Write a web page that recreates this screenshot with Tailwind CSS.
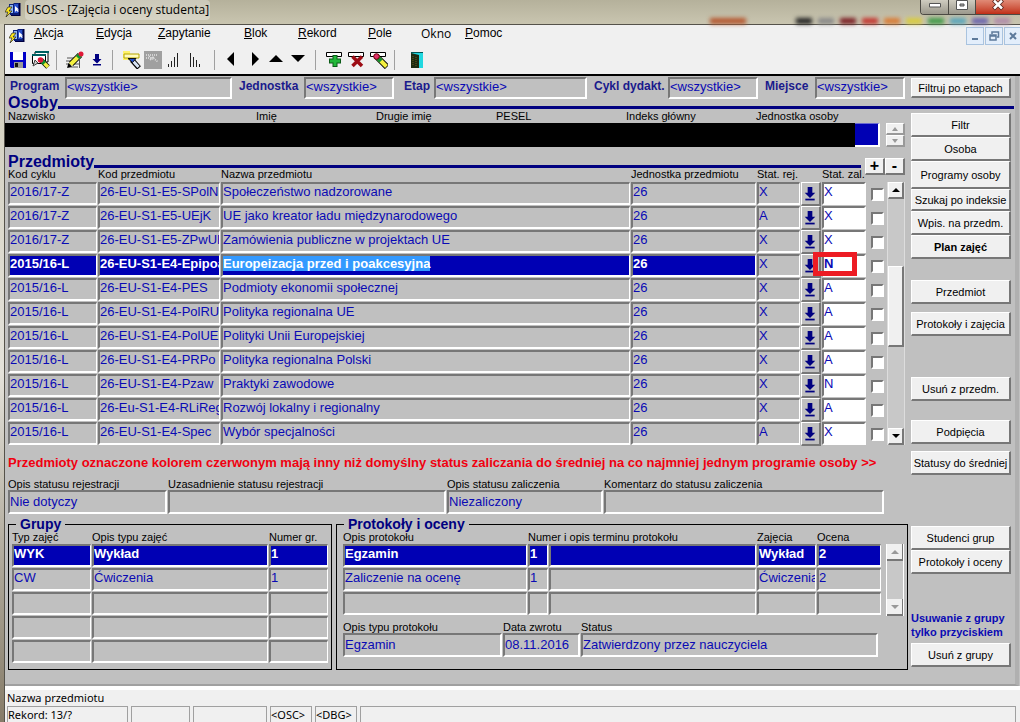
<!DOCTYPE html>
<html lang="pl">
<head>
<meta charset="utf-8">
<title>USOS - [Zajęcia i oceny studenta]</title>
<script src="https://cdn.jsdelivr.net/npm/@tailwindcss/browser@4"></script>
</head>
<body class="flex min-h-screen flex-col bg-[#c0c0c0] font-['Liberation_Sans',Arial,sans-serif] text-[11px] leading-3 text-black">

<svg class="hidden" aria-hidden="true">
  <symbol id="usos" viewBox="0 0 16 16">
    <path d="M4 2h4l1-1h5v12H5z" fill="#0a1e78"/><path d="M5 3h3v8H5z" fill="#8fb6f0"/><path d="M9 2h4v9H9z" fill="#2a50c8"/><path d="M10 4v6l1.500-1.500L13 10l.800-1-1.500-1.500H14z" fill="#fff"/><path d="M14 1h1.500v13H6v-1h8z" fill="#000040"/>
    <path d="M3 5L0 10h3l-2 5 6-6H4l3-4z" fill="#ffe81a" stroke="#222" stroke-width=".7"/>
  </symbol>
  <symbol id="darr" viewBox="0 0 10 12">
    <path d="M3 0h4v5h2.500L5 9.500.500 5H3z" fill="#000080"/><path d="M1 10h8v1.500H1z" fill="#000080"/>
  </symbol>
</svg>

<!-- title bar -->
<header class="relative flex h-6 shrink-0 items-start bg-linear-to-b from-[#b5b19b] to-[#c9c5b0] pl-[5px]">
  <svg class="mt-0.5 size-4"><use href="#usos"/></svg>
  <h1 class="ml-1 rounded bg-white/30 px-px font-['Open_Sans',sans-serif] text-[12px] leading-5">USOS - [Zajęcia i oceny studenta]</h1>
  <div class="absolute right-2.5 bottom-0 flex h-1.5 gap-1.5 blur-[2px]" aria-hidden="true">
    <i class="mr-11 w-9 bg-[#b5572f]"></i><i class="w-4 bg-[#222]"></i><i class="w-4 bg-[#888]"></i><i class="w-4 bg-[#7a1c22]"></i><i class="w-4 bg-[#c3342e]"></i><i class="w-4 bg-[#d97a33]"></i><i class="w-4 bg-[#d9cc3d]"></i><i class="w-4 bg-[#3f9a48]"></i><i class="w-4 bg-[#57a5bb]"></i><i class="w-4 bg-[#6a62ad]"></i><i class="w-4 bg-[#b08aa8]"></i>
  </div>
  <div class="relative ml-auto flex h-[15px] overflow-hidden rounded-bl-[4px] border border-t-0 border-r-0 border-[#4c4a44]">
    <button aria-label="Minimalizuj" class="flex w-7 justify-center border-r border-[#4c4a44] bg-linear-to-b from-[#cfccc0] to-[#9b988c] pt-0.5"><svg class="h-3 w-3" viewBox="0 0 12 12"><path d="M.5 1.500h11v3.500H.5z" fill="#fff" stroke="#555"/></svg></button>
    <button aria-label="Maksymalizuj" class="flex w-[27px] justify-center border-r border-[#4c4a44] bg-linear-to-b from-[#cfccc0] to-[#9b988c]"><svg class="h-3 w-3" viewBox="0 0 12 12"><path d="M.5.500h11v9H.5z" fill="#fff" stroke="#555"/><path d="M4 4h4v2H4z" fill="#aaa" stroke="#555"/></svg></button>
    <button aria-label="Zamknij" class="flex w-11 justify-center bg-linear-to-b from-[#e08a76] to-[#c02c14]"><svg class="h-3 w-3" viewBox="0 0 12 12"><path d="M1.500 0L10.500 9M10.500 0L1.500 9" stroke="#57241c" stroke-width="4"/><path d="M2 .5L10 8.500M10 .5L2 8.500" stroke="#fff" stroke-width="2.500"/></svg></button>
  </div>
</header>

<div class="flex grow">
<div class="w-1 shrink-0 bg-linear-to-b from-[#d0ccba] via-[#e4e2da] to-[#857b68]"></div>
<div class="flex min-w-0 grow flex-col border-t border-l border-[#55524a]">

  <!-- menu and toolbar -->
  <div class="border-b-2 border-black bg-[#f0f0f0]">
    <nav class="flex h-5 items-center pl-1 text-[12px] leading-4">
      <svg class="mt-0.5 size-4"><use href="#usos"/></svg>
      <a href="#" class="ml-[9px] w-[62px] pb-1"><u>A</u>kcja</a>
      <a href="#" class="w-[62px] pb-1"><u>E</u>dycja</a>
      <a href="#" class="w-[86px] pb-1"><u>Z</u>apytanie</a>
      <a href="#" class="w-[54px] pb-1"><u>B</u>lok</a>
      <a href="#" class="w-[70px] pb-1"><u>R</u>ekord</a>
      <a href="#" class="w-[53px] pb-1"><u>P</u>ole</a>
      <a href="#" class="w-[44px] pb-0.5 font-['Open_Sans',sans-serif]">Okno</a>
      <a href="#" class="pb-1"><u>P</u>omoc</a>
      <div class="mt-0.5 ml-auto flex gap-px">
        <button aria-label="Minimalizuj okno" class="flex h-[18px] w-[18px] items-center justify-center border border-[#a9c3df] bg-[#e3eefb]"><svg class="size-3" viewBox="0 0 12 12"><path d="M3 8h6v2H3z" fill="#5d7a9b"/></svg></button>
        <button aria-label="Przywróć okno" class="flex h-[18px] w-[18px] items-center justify-center border border-[#a9c3df] bg-[#e3eefb]"><svg class="size-3" viewBox="0 0 12 12" fill="none" stroke="#5d7a9b" stroke-width="1.500"><path d="M4 4V2h6.500v5H9M2 5h6v5H2zM2 6h6"/></svg></button>
        <button aria-label="Zamknij okno" class="flex h-[18px] w-4 items-center justify-center border border-r-0 border-[#a9c3df] bg-[#e3eefb]"><svg class="size-3" viewBox="0 0 12 12"><path d="M3 3l6 6M9 3l-6 6" stroke="#5d7a9b" stroke-width="2"/></svg></button>
      </div>
    </nav>
    <div class="flex h-[29px] items-center pl-[5px]">
      <button aria-label="Zapisz"><svg class="size-4" viewBox="0 0 16 16"><path d="M0 0h16v16H1l-1-1z" fill="#0000c8"/><path d="M3 0h10v8H3z" fill="#fff"/><path d="M4 10h9v6H4z" fill="#999"/><path d="M5 11h3v4H5z" fill="#111"/></svg></button>
      <button class="ml-1.5" aria-label="Wyszukaj"><svg class="size-[18px]" viewBox="0 0 18 18"><path d="M3 1h13v10H3z" fill="#fff" stroke="#000"/><path d="M.5 3.500h13v9H.5z" fill="#fff" stroke="#000"/><path d="M0 3h14v2H0zM3 0h14v2H3z" fill="#006060"/><path d="M3 9l-2 6 5-3z" fill="#ccc" stroke="#444"/><path d="M9 9l7 7" stroke="#000" stroke-width="5"/><path d="M9 9l7 7" stroke="#f4f040" stroke-width="3.500"/><path d="M9.500 9.500l3 3" stroke="#109030" stroke-width="4"/><circle cx="8.500" cy="9" r="2.800" fill="#e01838"/></svg></button>
      <i class="mr-[9px] ml-1.5 h-5 w-px bg-[#a0a0a0]"></i>
      <button aria-label="Edytuj"><svg class="size-[18px]" viewBox="0 0 18 18"><path d="M1 7h9M0 10h9M0 13h13M2 16h10M13.500 9v8" stroke="#555"/><path d="M5 13L14 4" stroke="#000" stroke-width="6"/><path d="M4.500 13.500L14 4" stroke="#f4f040" stroke-width="4"/><path d="M11.500 6.500L14 4" stroke="#109030" stroke-width="4.500"/><circle cx="15" cy="3" r="2.500" fill="#e01838"/><path d="M1 17l1.500-5 3.500 3.500z" fill="#000"/></svg></button>
      <button class="ml-2" aria-label="Lista wartości"><svg class="h-3 w-2.5"><use href="#darr"/></svg></button>
      <i class="mx-2.5 h-5 w-px bg-[#a0a0a0]"></i>
      <button aria-label="Wprowadź zapytanie"><svg class="size-[18px]" viewBox="0 0 18 18"><path d="M0 0h7v9H0z" fill="#fff36b"/><path d="M1 3h15v4H1z" fill="#fffbc0" stroke="#b5a400"/><path d="M9 9l7 8" stroke="#000" stroke-width="5"/><path d="M10 10l5.500 6" stroke="#d8e4f4" stroke-width="3"/><path d="M5 7.500h8l-3.500 4z" fill="#2050d0" stroke="#111"/></svg></button>
      <button class="ml-[3px]" aria-label="Anuluj zapytanie"><svg class="size-[18px]" viewBox="0 0 18 18"><path d="M0 0h18v18H0z" fill="#a0a0a0"/><path d="M2 4h12M2 7h5M8 6l6 5M6 9l4-3M5 5l4 4" stroke="#e4e4e4" stroke-width="1.500" stroke-dasharray="1 1"/></svg></button>
      <button class="ml-1.5" aria-label="Sortuj rosnąco"><svg class="h-4 w-3" viewBox="0 0 12 16"><path d="M.5 12v3M3.500 9v6M6.500 5v10M9.500 1v14" stroke="#222"/></svg></button>
      <button class="ml-2.5" aria-label="Sortuj malejąco"><svg class="h-4 w-3" viewBox="0 0 12 16"><path d="M.5 1v14M3.500 5v10M6.500 8v7M9.500 12v3" stroke="#222"/></svg></button>
      <i class="mx-3 h-5 w-px bg-[#a0a0a0]"></i>
      <button aria-label="Poprzedni blok"><svg class="h-4 w-2" viewBox="0 0 8 16"><path d="M0 7l7-7v14z"/></svg></button>
      <button class="ml-4" aria-label="Następny blok"><svg class="h-4 w-2" viewBox="0 0 8 16"><path d="M8 7L1 0v14z"/></svg></button>
      <button class="ml-2.5" aria-label="Poprzedni rekord"><svg class="h-4 w-3.5" viewBox="0 0 14 16"><path d="M0 10l7-7 7 7z"/></svg></button>
      <button class="ml-2" aria-label="Następny rekord"><svg class="h-4 w-3.5" viewBox="0 0 14 16"><path d="M0 3l7 7 7-7z"/></svg></button>
      <i class="mr-2.5 ml-2.5 h-5 w-px bg-[#a0a0a0]"></i>
      <button aria-label="Wstaw rekord"><svg class="h-[18px] w-4" viewBox="0 0 16 18"><path d="M.5 1.500h15v4H.5z" fill="#fff" stroke="#000"/><path d="M9 4v12M3 10h12" stroke="#0b5c18" stroke-width="5"/><path d="M9 5v10M4 10h10" stroke="#22b83a" stroke-width="3"/></svg></button>
      <button class="ml-1.5" aria-label="Usuń rekord"><svg class="h-[18px] w-4" viewBox="0 0 16 18"><path d="M.5 1.500h15v4H.5z" fill="#fff" stroke="#000"/><path d="M4.500 5.500l9.500 9.500M14 5.500L4.500 15" stroke="#9c0c14" stroke-width="3.500"/></svg></button>
      <button class="ml-1.5" aria-label="Wyczyść rekord"><svg class="size-[18px]" viewBox="0 0 18 18"><path d="M.5 1.500h15v4H.5z" fill="#fff" stroke="#000"/><path d="M6 5l11 11" stroke="#000" stroke-width="6"/><path d="M6 5l10.500 10.500" stroke="#f4f040" stroke-width="4"/><path d="M8 7l3 3" stroke="#109030" stroke-width="4.500"/><circle cx="6.500" cy="5.500" r="2.800" fill="#e0306a" stroke="#600"/></svg></button>
      <i class="mr-4 ml-1.5 h-5 w-px bg-[#a0a0a0]"></i>
      <button aria-label="Wyjście"><svg class="h-4 w-3" viewBox="0 0 12 16"><path d="M0 0h12v16H0z" fill="#20d8e0"/><path d="M0 0h12v1H0z" fill="#055"/><path d="M0 1l8 2v13H0z" fill="#1c2a10"/><path d="M2 4v10M5 5v10" stroke="#6a5a20" stroke-dasharray="1 1"/></svg></button>
    </div>
  </div>

  <!-- form -->
  <main class="mr-px flex grow flex-col border-r-4 border-b-2 border-[#a0a0a0] border-r-[#b0b0b0] pr-px pb-3">
    <!-- filters -->
    <form class="flex h-6 items-center pr-[3px] pl-[5px] text-[13px] font-bold text-[#1a1a8c]">
      <label for="f1" class="w-[55px] shrink-0 pb-1 text-[12px]">Program</label>
      <input id="f1" readonly value="&lt;wszystkie&gt;" class="h-[22px] w-[167px] shrink-0 border-2 border-white border-t-[#777] border-l-[#777] pb-[3px] font-normal text-[#0a0ab4]">
      <label for="f2" class="ml-[7px] w-[65px] shrink-0 pb-1 text-[12px]">Jednostka</label>
      <input id="f2" readonly value="&lt;wszystkie&gt;" class="h-[22px] w-[90px] shrink-0 border-2 border-white border-t-[#777] border-l-[#777] pb-[3px] font-normal text-[#0a0ab4]">
      <label for="f3" class="ml-2.5 w-[30px] shrink-0 pb-1 text-[12px]">Etap</label>
      <input id="f3" readonly value="&lt;wszystkie&gt;" class="h-[22px] min-w-0 flex-1 border-2 border-white border-t-[#777] border-l-[#777] pb-[3px] font-normal text-[#0a0ab4]">
      <label for="f4" class="ml-[7px] w-[74px] shrink-0 pb-1 text-[12px] whitespace-nowrap">Cykl dydakt.</label>
      <input id="f4" readonly value="&lt;wszystkie&gt;" class="h-[22px] w-[90px] shrink-0 border-2 border-white border-t-[#777] border-l-[#777] pb-[3px] font-normal text-[#0a0ab4]">
      <label for="f5" class="ml-[7px] w-[50px] shrink-0 pb-1 text-[12px]">Miejsce</label>
      <input id="f5" readonly value="&lt;wszystkie&gt;" class="h-[22px] w-[90px] shrink-0 border-2 border-white border-t-[#777] border-l-[#777] pb-[3px] font-normal text-[#0a0ab4]">
      <button type="button" class="ml-1.5 h-5 w-[100px] shrink-0 border border-r-2 border-b-2 border-[#777] border-t-white border-l-white bg-[#f0f0f0] text-[11px] font-normal text-black">Filtruj po etapach</button>
    </form>
    <div class="flex h-[9px] items-end pl-[3px]">
      <h2 class="text-[16px] leading-3 font-bold text-[#000080]">Osoby</h2>
      <i class="h-[3px] flex-1 bg-[#000080]"></i>
    </div>

    <div class="flex">
      <div class="min-w-0 flex-1 pl-[3px]">
        <!-- persons -->
        <div class="flex h-3.5 items-center">
          <span class="w-[248px]">Nazwisko</span><span class="w-[120px]">Imię</span><span class="w-[120px]">Drugie imię</span><span class="w-[130px]">PESEL</span><span class="w-[130px]">Indeks główny</span><span>Jednostka osoby</span>
        </div>
        <div class="-ml-[3px] flex h-6 pr-[3px]">
          <div class="flex-1 bg-black"></div>
          <div class="mr-1.5 w-[25px] border-t border-r-2 border-b-2 border-white border-t-[#6a6ad0] bg-[#0000b4]"></div>
          <div class="flex w-[19px] flex-col">
            <button aria-label="Poprzednia osoba" class="flex h-3 items-center justify-center border border-r-2 border-b-2 border-[#999] border-t-white border-l-white bg-[#f0f0f0]"><svg class="h-1 w-1.5" viewBox="0 0 6 4"><path d="M0 4l3-4 3 4z" fill="#999"/></svg></button>
            <button aria-label="Następna osoba" class="flex h-3 items-center justify-center border border-r-2 border-b-2 border-[#999] border-t-white border-l-white bg-[#f0f0f0]"><svg class="h-1 w-1.5" viewBox="0 0 6 4"><path d="M0 0l3 4 3-4z" fill="#999"/></svg></button>
          </div>
        </div>

        <!-- subjects -->
        <div class="flex h-[21px] items-end pr-[3px]">
          <h2 class="text-[16px] leading-3 font-bold text-[#000080]">Przedmioty</h2>
          <i class="mr-1 h-[3px] flex-1 bg-[#000080]"></i>
          <div class="-mb-[7px] flex text-[16px] leading-3 font-bold">
            <button class="h-[17px] w-5 border border-r-2 border-b-2 border-[#777] border-t-white border-l-white bg-[#f0f0f0]">+</button>
            <button class="h-[17px] w-5 border border-r-2 border-b-2 border-[#777] border-t-white border-l-white bg-[#f0f0f0]">-</button>
          </div>
        </div>
        <div class="flex">
          <table class="-ml-px w-0 min-w-0 flex-1 table-fixed border-separate border-spacing-x-px border-spacing-y-0">
            <colgroup><col class="w-[89px]"><col class="w-[122px]"><col><col class="w-[125px]"><col class="w-[43px]"><col class="w-5"><col class="w-[44px]"><col class="w-[19px]"></colgroup>
            <thead><tr class="h-[14px] text-left align-top whitespace-nowrap"><th class="p-0 font-normal">Kod cyklu</th><th class="p-0 font-normal">Kod przedmiotu</th><th class="p-0 font-normal">Nazwa przedmiotu</th><th class="p-0 font-normal">Jednostka przedmiotu</th><th class="p-0 font-normal" colspan="2">Stat. rej.</th><th class="p-0 font-normal" colspan="2">Stat. zal.</th></tr></thead>
            <tbody id="subjects"></tbody>
          </table>
          <div class="mt-[14px] mr-[3px] mb-px flex w-[18px] flex-col border-x border-[#ddd]">
            <button aria-label="W górę" class="flex h-[17px] shrink-0 items-center justify-center border border-r-2 border-b-2 border-[#777] border-t-white border-l-white bg-[#f0f0f0]"><svg class="h-1 w-2" viewBox="0 0 8 4"><path d="M0 4l4-4 4 4z"/></svg></button>
            <div class="h-[67px] bg-[#c8c8c8]"></div>
            <div class="h-[81px] border border-r-2 border-b-2 border-[#777] border-t-white border-l-white bg-[#f0f0f0]"></div>
            <div class="flex-1 bg-[#c8c8c8]"></div>
            <button aria-label="W dół" class="flex h-[17px] shrink-0 items-center justify-center border border-r-2 border-b-2 border-[#777] border-t-white border-l-white bg-[#f0f0f0]"><svg class="h-1 w-2" viewBox="0 0 8 4"><path d="M0 0l4 4 4-4z"/></svg></button>
          </div>
        </div>

        <p class="mt-[9px] text-[13px] leading-4 font-bold whitespace-nowrap text-[#f00010]">Przedmioty oznaczone kolorem czerwonym mają inny niż domyślny status zaliczania do średniej na co najmniej jednym programie osoby &gt;&gt;</p>

        <div class="mt-[7px] flex gap-px pr-6">
          <label class="flex w-[159px] flex-col">Opis statusu rejestracji
            <input readonly value="Nie dotyczy" class="h-6 w-full border-2 border-white border-t-[#777] border-l-[#777] pb-0.5 text-[13px] text-[#0a0ab4]"></label>
          <label class="flex flex-1 flex-col">Uzasadnienie statusu rejestracji
            <input readonly class="h-6 w-full border-2 border-white border-t-[#777] border-l-[#777] text-[13px] text-[#0a0ab4]"></label>
          <label class="flex w-[156px] flex-col">Opis statusu zaliczenia
            <input readonly value="Niezaliczony" class="h-6 w-full border-2 border-white border-t-[#777] border-l-[#777] pb-0.5 text-[13px] text-[#0a0ab4]"></label>
          <label class="flex w-[280px] flex-col">Komentarz do statusu zaliczenia
            <input readonly class="h-6 w-full border-2 border-white border-t-[#777] border-l-[#777] text-[13px] text-[#0a0ab4]"></label>
        </div>

        <!-- groups and grades -->
        <div class="mt-[5px] flex items-stretch gap-1">
          <fieldset class="w-[324px] border border-black px-0.5 pb-[5px]">
            <legend class="ml-[5px] px-1 text-[14px] leading-[10px] font-bold text-[#000080]">Grupy</legend>
            <table class="w-full table-fixed border-separate border-spacing-x-px border-spacing-y-0">
              <colgroup><col class="w-[79px]"><col><col class="w-[59px]"></colgroup>
              <thead><tr class="h-[15px] text-left whitespace-nowrap"><th class="p-0 font-normal">Typ zajęć</th><th class="p-0 font-normal">Opis typu zajęć</th><th class="p-0 font-normal">Numer gr.</th></tr></thead>
              <tbody id="groups"></tbody>
            </table>
          </fieldset>
          <fieldset class="min-w-0 flex-1 border border-black pr-[3px] pb-[5px] pl-1.5">
            <legend class="ml-px px-1 text-[14px] leading-[10px] font-bold text-[#000080]">Protokoły i oceny</legend>
            <div class="flex">
              <table class="mr-1 -ml-px w-0 min-w-0 flex-1 table-fixed border-separate border-spacing-x-px border-spacing-y-0">
                <colgroup><col class="w-[184px]"><col class="w-5"><col><col class="w-[59px]"><col class="w-[64px]"></colgroup>
                <thead><tr class="h-[15px] text-left whitespace-nowrap"><th class="p-0 font-normal">Opis protokołu</th><th class="p-0 font-normal" colspan="2">Numer i opis terminu protokołu</th><th class="p-0 font-normal">Zajęcia</th><th class="p-0 font-normal">Ocena</th></tr></thead>
                <tbody id="protocols"></tbody>
              </table>
              <div class="mt-[15px] flex w-[18px] flex-col border-x border-white">
                <button aria-label="W górę" class="flex h-[17px] items-center justify-center border-r border-b-2 border-[#777] bg-[#f0f0f0]"><svg class="h-1 w-2" viewBox="0 0 8 4"><path d="M0 4l4-4 4 4z" fill="#999"/></svg></button>
                <div class="flex-1 bg-[#c8c8c8]"></div>
                <button aria-label="W dół" class="flex h-[17px] items-center justify-center border-r border-b-2 border-[#777] bg-[#f0f0f0]"><svg class="h-1 w-2" viewBox="0 0 8 4"><path d="M0 0l4 4 4-4z" fill="#999"/></svg></button>
              </div>
            </div>
            <div class="mt-[5px] flex gap-px pr-[26px]">
              <label class="flex w-[159px] flex-col">Opis typu protokołu
                <input readonly value="Egzamin" class="h-6 w-full border-2 border-white border-t-[#777] border-l-[#777] pb-0.5 text-[13px] text-[#0a0ab4]"></label>
              <label class="flex w-[77px] flex-col">Data zwrotu
                <input readonly value="08.11.2016" class="h-6 w-full border-2 border-white border-t-[#777] border-l-[#777] pb-0.5 text-[13px] text-[#0a0ab4]"></label>
              <label class="flex flex-1 flex-col">Status
                <input readonly value="Zatwierdzony przez nauczyciela" class="h-6 w-full border-2 border-white border-t-[#777] border-l-[#777] pb-0.5 text-[13px] text-[#0a0ab4]"></label>
            </div>
          </fieldset>
        </div>
      </div>

      <!-- actions -->
      <aside class="mr-[3px] ml-[3px] flex w-[100px] shrink-0 flex-col pt-1 *:shrink-0">
        <button class="h-6 border border-r-2 border-b-2 border-[#777] border-t-white border-l-white bg-[#f0f0f0]">Filtr</button>
        <button class="h-6 border border-r-2 border-b-2 border-[#777] border-t-white border-l-white bg-[#f0f0f0]">Osoba</button>
        <button class="h-7 border border-r-2 border-b-2 border-[#777] border-t-white border-l-white bg-[#f0f0f0]">Programy osoby</button>
        <button class="h-[22px] border border-r-2 border-b-2 border-[#777] border-t-white border-l-white bg-[#f0f0f0]">Szukaj po indeksie</button>
        <button class="h-6 border border-r-2 border-b-2 border-[#777] border-t-white border-l-white bg-[#f0f0f0]">Wpis. na przedm.</button>
        <button class="h-6 border border-r-2 border-b-2 border-[#777] border-t-white border-l-white bg-[#f0f0f0] font-bold">Plan zajęć</button>
        <button class="mt-[21px] h-6 border border-r-2 border-b-2 border-[#777] border-t-white border-l-white bg-[#f0f0f0]">Przedmiot</button>
        <button class="mt-2 h-6 border border-r-2 border-b-2 border-[#777] border-t-white border-l-white bg-[#f0f0f0]">Protokoły i zajęcia</button>
        <button class="mt-[41px] h-6 border border-r-2 border-b-2 border-[#777] border-t-white border-l-white bg-[#f0f0f0]">Usuń z przedm.</button>
        <button class="mt-[19px] h-6 border border-r-2 border-b-2 border-[#777] border-t-white border-l-white bg-[#f0f0f0]">Podpięcia</button>
        <button class="mt-[7px] h-6 border border-r-2 border-b-2 border-[#777] border-t-white border-l-white bg-[#f0f0f0] whitespace-nowrap">Statusy do średniej</button>
        <button class="mt-[51px] h-6 border border-r-2 border-b-2 border-[#777] border-t-white border-l-white bg-[#f0f0f0]">Studenci grup</button>
        <button class="h-6 border border-r-2 border-b-2 border-[#777] border-t-white border-l-white bg-[#f0f0f0]">Protokoły i oceny</button>
        <p class="mt-[37px] leading-[14px] font-bold whitespace-nowrap text-[#0a0ab4]">Usuwanie z grupy<br>tylko przyciskiem</p>
        <button class="mt-1 h-6 border border-r-2 border-b-2 border-[#777] border-t-white border-l-white bg-[#f0f0f0]">Usuń z grupy</button>
      </aside>
    </div>
  </main>

  <!-- status bar -->
  <footer class="shrink-0 border-t-4 border-white bg-[#f0f0f0] pl-0.5 font-['Noto_Sans',sans-serif] text-[11px]">
    <p class="h-4 leading-4">Nazwa przedmiotu</p>
    <div class="flex h-4 gap-[3px] leading-4 *:border-t *:border-l *:border-[#a0a0a0]">
      <span class="w-[121px] border-r border-r-white">Rekord: 13/?</span><span class="w-[59px] border-r border-r-white"></span><span class="w-[74px] border-r border-r-white"></span><span class="w-[42px] border-r border-r-white">&lt;OSC&gt;</span><span class="w-[42px] border-r border-r-white">&lt;DBG&gt;</span><span class="mr-1 flex-1 border-r border-r-white"></span>
    </div>
  </footer>
</div>
</div>

<script>
const base = 'h-[23px] mb-px overflow-hidden whitespace-nowrap border-2 border-r border-white border-t-[#777] border-l-[#777] text-[13px] leading-4 ';
const plain = 'text-[#0a0ab4]';
const active = 'bg-[#0000b4] font-bold text-white';
const cell = (t, on) => `<td class="p-0"><div class="${base}${on ? active : plain}">${t}</div></td>`;

const subjects = [
  ['2016/17-Z', '26-EU-S1-E5-SPolN', 'Społeczeństwo nadzorowane', 'X', 'X'],
  ['2016/17-Z', '26-EU-S1-E5-UEjK', 'UE jako kreator ładu międzynarodowego', 'A', 'X'],
  ['2016/17-Z', '26-EU-S1-E5-ZPwUE', 'Zamówienia publiczne w projektach UE', 'X', 'X'],
  ['2015/16-L', '26-EU-S1-E4-Epipoa', 'Europeizacja przed i poakcesyjna', 'X', 'N', true],
  ['2015/16-L', '26-EU-S1-E4-PES', 'Podmioty ekonomii społecznej', 'X', 'A'],
  ['2015/16-L', '26-EU-S1-E4-PolRUE', 'Polityka regionalna UE', 'X', 'A'],
  ['2015/16-L', '26-EU-S1-E4-PolUE', 'Polityki Unii Europejskiej', 'X', 'A'],
  ['2015/16-L', '26-EU-S1-E4-PRPo', 'Polityka regionalna Polski', 'X', 'A'],
  ['2015/16-L', '26-EU-S1-E4-Pzaw', 'Praktyki zawodowe', 'X', 'N'],
  ['2015/16-L', '26-Eu-S1-E4-RLiReg', 'Rozwój lokalny i regionalny', 'X', 'A'],
  ['2015/16-L', '26-EU-S1-E4-Spec', 'Wybór specjalności', 'A', 'X'],
];
document.getElementById('subjects').innerHTML = subjects.map(([c, k, n, r, z, on]) => `<tr>
  ${cell(c, on)}${cell(k, on)}${cell(on ? `<span class="bg-[#3399ff]">${n}</span>` : n, on)}${cell('26', on)}${cell(r)}
  <td class="p-0"><button aria-label="Lista statusów" class="flex h-6 w-full items-center justify-center border border-r-2 border-b-2 border-[#777] border-t-white border-l-white"><svg class="h-3.5 w-3 shrink-0"><use href="#darr"/></svg></button></td>
  <td class="relative p-0"><input aria-label="Status zaliczenia" value="${z}" class="mb-px block h-[23px] w-full border-2 border-white border-t-[#777] border-l-[#777] bg-white pb-[5px] text-[13px] text-[#0a0ab4] ${on ? 'font-bold' : ''}">${on ? '<span class="pointer-events-none absolute -top-0.5 -left-[9px] h-6 w-11 border-[5px] border-[#ed1c24]"></span>' : ''}</td>
  <td class="p-0"><input type="checkbox" aria-label="Zaznacz przedmiot" class="ml-1 block size-[13px] appearance-none border-2 border-white border-t-[#777] border-l-[#777] bg-white"></td></tr>`).join('');

const rows = list => list.map((r, i) => `<tr>${r.map(t => cell(t, i === 0)).join('')}</tr>`).join('');
document.getElementById('groups').innerHTML = rows([['WYK', 'Wykład', '1'], ['CW', 'Ćwiczenia', '1'], ['', '', ''], ['', '', ''], ['', '', '']]);
document.getElementById('protocols').innerHTML = rows([['Egzamin', '1', '', 'Wykład', '2'], ['Zaliczenie na ocenę', '1', '', 'Ćwiczenia', '2'], ['', '', '', '', '']]);
</script>
</body>
</html>
